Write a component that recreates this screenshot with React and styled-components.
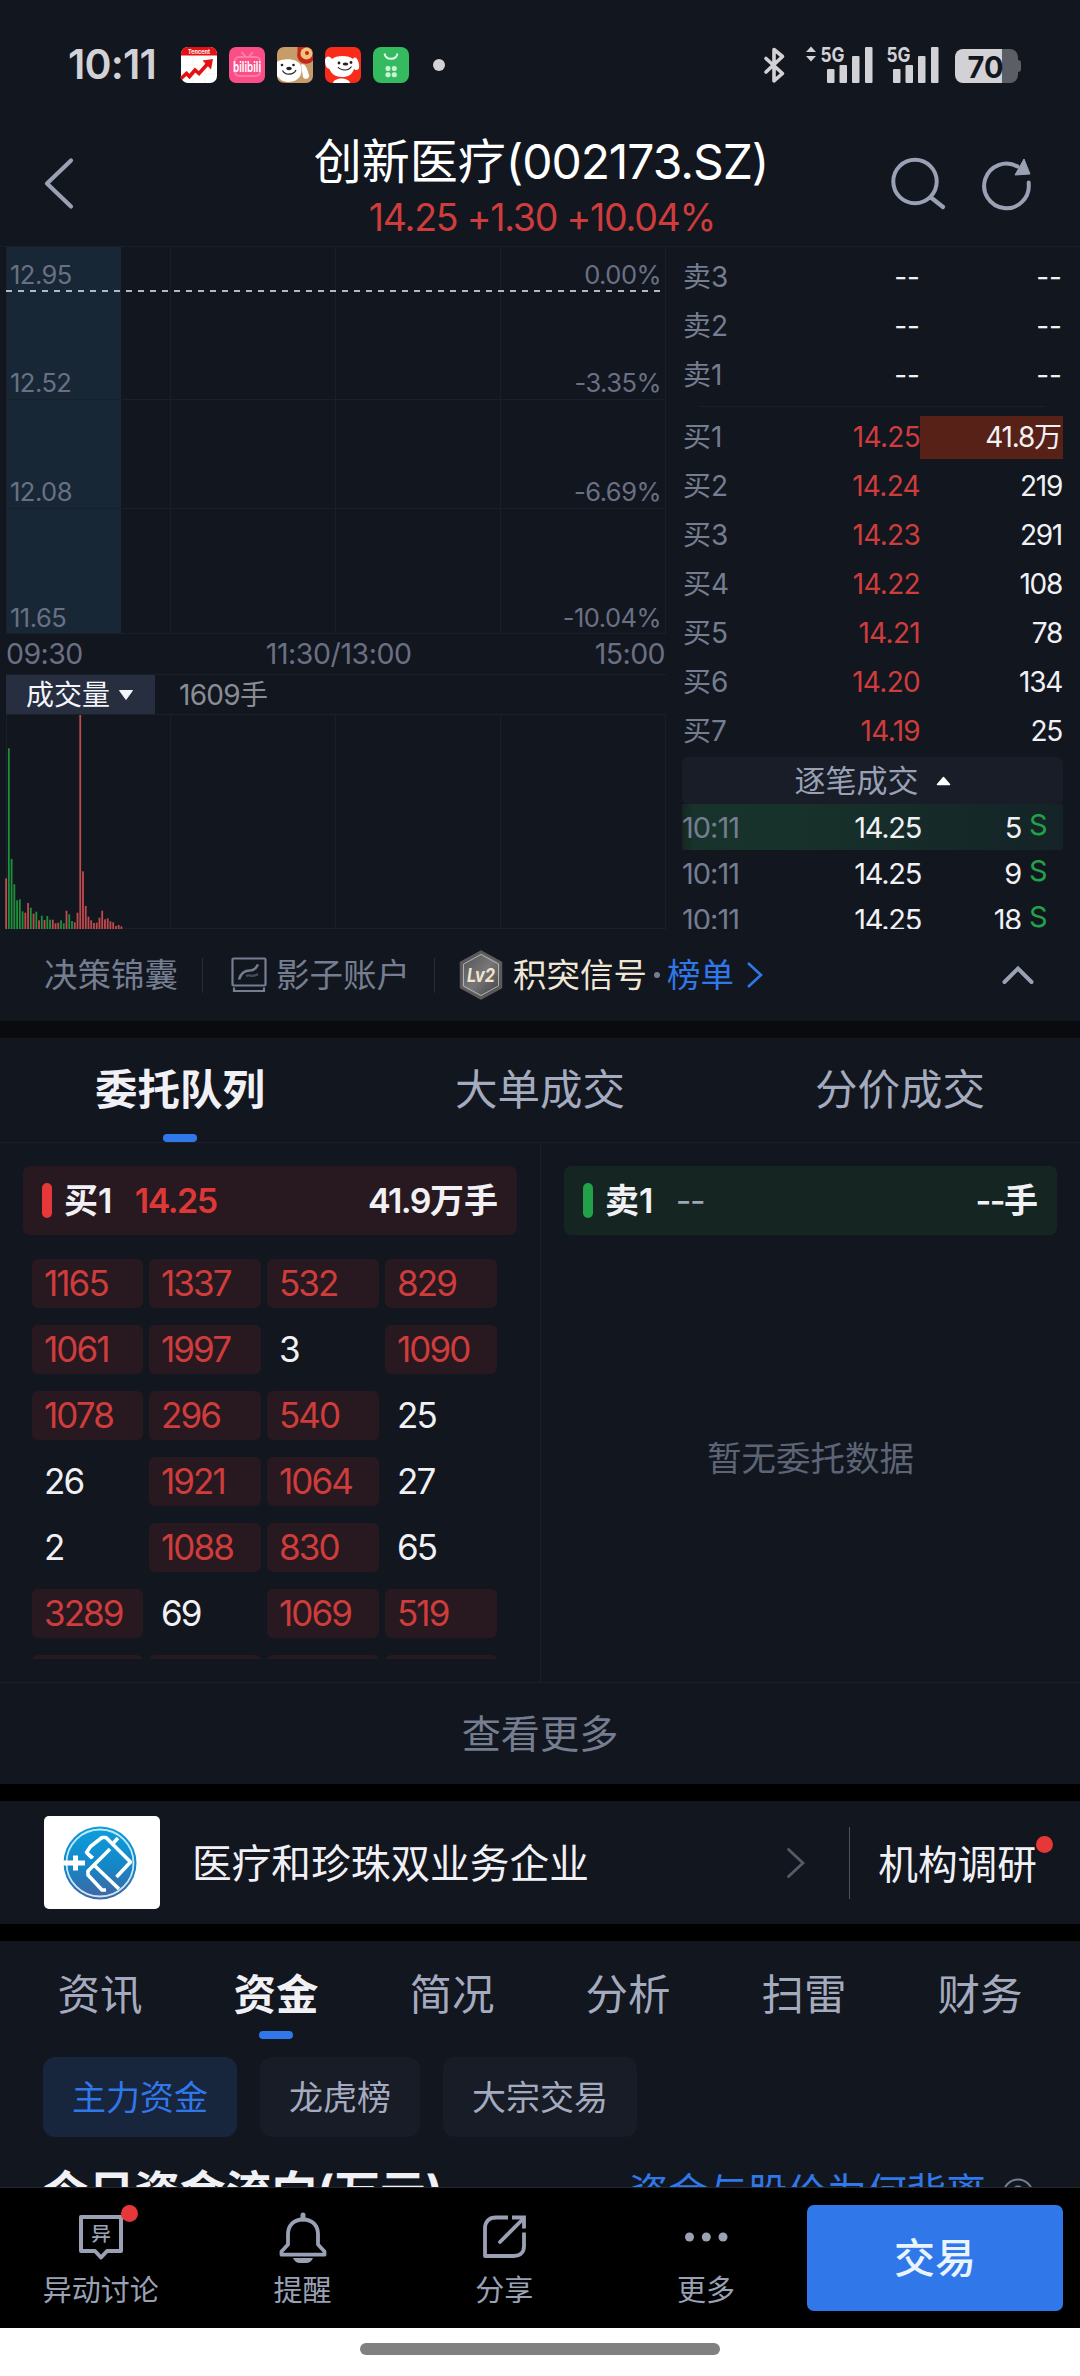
import React from 'react';
import styled, { createGlobalStyle, ThemeProvider } from 'styled-components';

const theme = {
  background: '#12161f',
  black: '#000000',
  line: '#1b1f29',
  red: '#cf3c3c',
  red_solid: '#e63838',
  red_background: '#27191f',
  green: '#22a04a',
  green_background: '#152521',
  blue: '#3078ea',
  text: '#f1f1f5',
  text_tab: '#a5abbf',
  text_label: '#757d90',
  text_axis: '#6a7084',
  text_cream: '#f0e6d6',
  icon: '#9aa1b5'
};

const GlobalStyle = createGlobalStyle`
  * {
    box-sizing: border-box;
  }

  body {
    margin: 0;
    background: #12161f;
    font-family: Inter, 'Noto Sans CJK SC', sans-serif;
  }

  p {
    margin: 0;
  }

  svg {
    display: block;
    flex: none;
    overflow: visible;
  }
`;

const Screen = styled.div`
  width: 1080px;
  height: 2376px;
  display: flex;
  flex-direction: column;
  overflow: hidden;
  white-space: nowrap;
  background: ${props => props.theme.background};
  color: ${props => props.theme.text};
`;

// digits sit tighter than the face's own spacing
const Num = styled.span`
  letter-spacing: ${props => props.$track || '-0.045em'};
`;

const Gap = styled.div`
  flex: none;
  height: 17px;
  background: ${props => props.$color || props.theme.black};
`;

/* ---------- status bar ---------- */

const StatusBar = styled.div`
  flex: none;
  height: 118px;
  padding: 40px 58px 28px 68px;
  display: flex;
  align-items: center;
  color: #d2d1d6;

  .status__time {
    width: 113px;
    font-size: 41px;
    font-weight: 600;
    line-height: 50px;
    padding-bottom: 2px;
  }

  .status__apps {
    display: flex;
    align-items: center;
    gap: 12px;
  }

  .status__dot {
    width: 12px;
    height: 12px;
    margin-left: 12px;
    border-radius: 50%;
    background: #d2d1d6;
  }

  .status__system {
    margin-left: auto;
  }
`;

const TencentIcon = () => (
  <svg width="36" height="36" viewBox="0 0 36 36">
    <rect width="36" height="36" rx="7" fill="#fff" />
    <path d="M0 8.500V7a7 7 0 0 1 7-7h22a7 7 0 0 1 7 7v1.500z" fill="#e60f12" />
    <text x="18" y="6.500" fontSize="5.500" fontWeight="700" fill="#fff" textAnchor="middle">
      Tencent
    </text>
    <path d="M12 9v27M24 9v27M0 18h36M0 27h36" stroke="#eee" strokeWidth="0.700" />
    <path d="M0 31.500l5.500-5 3 3 5.500-6.500 4 3.500L26.500 17" fill="none" stroke="#e60f12" strokeWidth="3.600" />
    <path d="M21.500 13.500l10.500-1.500-2 10.500z" fill="#e60f12" />
  </svg>
);

const BiliIcon = () => (
  <svg width="36" height="36" viewBox="0 0 36 36">
    <rect width="36" height="36" rx="7" fill="#fb4d86" />
    <rect x="6" y="10" width="25" height="19" rx="4" fill="none" stroke="#fd7ba6" strokeWidth="2" />
    <path d="M12.500 5l4 4.500M24 5l-4 4.500" stroke="#fd7ba6" strokeWidth="2" />
    <text x="18" y="24.500" fontSize="14" fontWeight="600" fill="#fff" textAnchor="middle" textLength="28" lengthAdjust="spacingAndGlyphs">
      bilibili
    </text>
  </svg>
);

const DogFinanceIcon = () => (
  <svg width="36" height="36" viewBox="0 0 36 36">
    <rect width="36" height="36" rx="7" fill="#c89c68" />
    <path d="M20.500 0H29a7 7 0 0 1 7 7v6.500a9 9 0 0 1-15.500-8.500z" fill="#c5261c" />
    <circle cx="29.500" cy="6.500" r="6" fill="#f3c27a" />
    <circle cx="30" cy="6" r="2" fill="#c5261c" />
    <path d="M24 17.500c5-2 6 5 8 10.500 1 4-5 5-6 2z" fill="#fff" />
    <path d="M0 15c5-4 20-4 23.500 3 2 7 1 12-5 15.500-5 2-12 2-15-1L0 29z" fill="#fff" />
    <circle cx="5" cy="18" r="1.300" fill="#222" />
    <circle cx="16.500" cy="18" r="1.300" fill="#222" />
    <ellipse cx="12" cy="21.500" rx="2.800" ry="1.700" fill="#222" />
    <path d="M5.500 23.500c2.500 5 11 5 13.500-.5" fill="none" stroke="#222" strokeWidth="1.200" />
    <path d="M3 34c4 2 8 2 10 2H7a7 7 0 0 1-4-2z" fill="#c5261c" />
  </svg>
);

const DogIcon = () => (
  <svg width="36" height="36" viewBox="0 0 36 36">
    <rect width="36" height="36" rx="7" fill="#f92c1a" />
    <path d="M0 13c1-5 5-4 7-1 4-4 17-4 21 0 3-5 7 4 6 9-1 3-4 2-5 1-2 6-6 8-12 8S6 27 4.500 22C1 21 0 18 0 13z" fill="#fff" />
    <circle cx="14" cy="16" r="1.400" fill="#222" />
    <circle cx="26" cy="15.500" r="1.400" fill="#222" />
    <ellipse cx="20.500" cy="17" rx="2.800" ry="1.500" fill="#222" />
    <path d="M13 20c3 4 11 4 13.500-.5" fill="none" stroke="#222" strokeWidth="1.100" />
    <path d="M8 36c1-6 16-6 17 0z" fill="#fff" />
  </svg>
);

const MarketIcon = () => (
  <svg width="36" height="36" viewBox="0 0 36 36">
    <rect width="36" height="36" rx="8" fill="#34bb5f" />
    <path d="M11.500 6.500c1 7 12 7 13 0" fill="none" stroke="#e4fbe9" strokeWidth="1.800" />
    <g fill="#c9f3d4">
      <rect x="12.500" y="19" width="5" height="5" rx="2" />
      <rect x="18.800" y="19" width="5" height="5" rx="2" />
      <rect x="12.500" y="25.200" width="5" height="5" rx="2" />
      <rect x="18.800" y="25.200" width="5" height="5" rx="2" />
    </g>
  </svg>
);

const SystemIcons = () => (
  <svg width="260" height="40" viewBox="762 44 260 40">
    <path
      d="M766 57.500l16.500 15L774 79.800V48.500l8.500 7L766 71"
      fill="none"
      stroke="#d2d1d6"
      strokeWidth="3.600"
      strokeLinejoin="round"
      strokeLinecap="round"
    />
    <g fill="#d2d1d6">
      <path d="M811 45.500l5 5.500h-10zM811 60.500l5-5.500h-10z" />
      <text x="820.500" y="61" fontSize="20.500" fontWeight="700" textLength="24" lengthAdjust="spacingAndGlyphs">
        5G
      </text>
      <rect x="827" y="68" width="7.500" height="14" rx="1" />
      <rect x="839.500" y="64" width="7.500" height="18" rx="1" />
      <rect x="852" y="55" width="7.500" height="27" rx="1" />
      <rect x="865" y="46" width="7.500" height="36" rx="1" />
      <text x="886.500" y="61" fontSize="20.500" fontWeight="700" textLength="24" lengthAdjust="spacingAndGlyphs">
        5G
      </text>
      <rect x="893" y="68" width="7.500" height="14" rx="1" />
      <rect x="905.500" y="64" width="7.500" height="18" rx="1" />
      <rect x="918" y="55" width="7.500" height="27" rx="1" />
      <rect x="931" y="46" width="7.500" height="36" rx="1" />
      <path d="M963 48h39v34h-39a8 8 0 0 1-8-8V56a8 8 0 0 1 8-8z" />
    </g>
    <path d="M1002 48h8a8 8 0 0 1 8 8v3c2 0 3 1 3 3v6c0 2-1 3-3 3v3a8 8 0 0 1-8 8h-8z" fill="#5c5e66" />
    <text x="985.500" y="76.500" fontSize="30" fontWeight="700" fill="#12161f" textAnchor="middle" textLength="36" lengthAdjust="spacingAndGlyphs">
      70
    </text>
  </svg>
);

/* ---------- header ---------- */

const HeaderBar = styled.div`
  flex: none;
  height: 129px;
  display: grid;
  grid-template-columns: 236px 1fr 236px;
  border-bottom: 1px solid ${props => props.theme.line};

  .header__back {
    padding: 38px 0 0 43px;
  }

  .header__title {
    padding: 18px 0 0 2px;
    text-align: center;
    font-size: 48px;
    line-height: 52px;
    color: #ffffff;
  }

  .header__quote {
    padding: 9px 0 0 4px;
    font-size: 37.5px;
    line-height: 42px;
    color: ${props => props.theme.red};
    text-align: center;
  }

  .header__actions {
    display: flex;
    gap: 34px;
    padding: 38px 0 0 45px;
  }
`;

/* ---------- charts and order book ---------- */

const Market = styled.div`
  flex: none;
  height: 682px;
  display: grid;
  grid-template-columns: 666px 1fr;
`;

const Charts = styled.div`
  padding-left: 6px;
  display: flex;
  flex-direction: column;
`;

const PriceChart = styled.div`
  position: relative;
  height: 387px;
`;

const AxisLabel = styled.span`
  position: absolute;
  top: ${props => props.$top}px;
  ${props => (props.$right ? 'right: 5px;' : 'left: 4px;')}
  font-size: 25.5px;
  line-height: 30px;
  letter-spacing: -0.02em;
  color: ${props => props.theme.text_axis};
`;

const TimeAxis = styled.div`
  height: 40px;
  padding-right: 1px;
  display: flex;
  justify-content: space-between;
  align-items: center;
  font-size: 28.5px;
  line-height: 38px;
  color: ${props => props.theme.text_axis};
`;

const VolumeHead = styled.div`
  height: 40px;
  display: flex;
  align-items: center;
  border-top: 1px solid ${props => props.theme.line};
  font-size: 28px;
  line-height: 40px;
  color: #8a8d95;

  .volume__pill {
    width: 149px;
    height: 40px;
    margin-right: 24px;
    padding-left: 20px;
    display: flex;
    align-items: center;
    gap: 8px;
    background: #272e40;
    color: #f4f5fa;
  }
`;

const VolumeSvg = styled.svg`
  margin-left: -1px;
`;

const VOLUMES =
  'r50.7 g180.7 g70 g44.7 g28.7 g29.7 g17.7 r16.3 r26 g21.3 r15.3 g17.3 r8.7 g13.3 r9 g13 g9.3 r9.3 r5.7 r6.3 g8.7 g5.7 r18.3 g14.7 g8 r6.7 r16.3 r214 r57.7 r23 r12.3 r8.7 r6 r6.3 r11.3 r18.3 r9.7 r10.7 r7.7 r6.7 r3 r4 r2.7'
    .split(' ')
    .map(v => ({ up: v[0] === 'r', height: Number(v.slice(1)) }));

const PriceGrid = () => (
  <svg width="660" height="387" viewBox="0 0 660 387">
    <rect width="115" height="387" fill="#172736" />
    <path
      d="M.5 0v387M164.500 0v387M329.500 0v387M494.500 0v387M659.500 0v387M0 152.500h660M0 261.500h660M0 386.500h660"
      stroke="#1b1f29"
    />
    <path d="M0 44h655" stroke="#b3b8c6" strokeWidth="2" strokeDasharray="6 6" />
  </svg>
);

const VolumeGrid = () => (
  <VolumeSvg width="662" height="215" viewBox="-1 0 662 215">
    <path
      d="M.5 0v215M164.500 0v215M329.500 0v215M494.500 0v215M659.500 0v215M0 .5h660M0 214.500h660"
      stroke="#1b1f29"
    />
    {VOLUMES.map((v, i) => (
      <rect
        key={i}
        x={i * 2.746 - 0.8}
        y={215 - v.height}
        width="1.8"
        height={v.height}
        fill={v.up ? '#c04a4c' : '#1f8f3c'}
      />
    ))}
  </VolumeSvg>
);

const Book = styled.div`
  height: 682px;
  padding: 6px 17px 0 16px;
  overflow: hidden;

  .book__divider {
    height: 1px;
    margin: 6px 17px 6px;
    background: ${props => props.theme.line};
  }
`;

const BookRow = styled.div`
  display: grid;
  grid-template-columns: 60px 178px 143px;
  height: 49px;
  align-items: center;
  text-align: right;
  font-size: 28px;
  line-height: 43px;

  .book__label {
    padding-left: 1px;
    text-align: left;
    color: ${props => props.theme.text_label};
  }

  .book__price {
    color: ${props => (props.$bid ? props.theme.red : props.theme.text)};
  }

  .book__volume {
    height: 43px;
    padding-right: 1px;
    background: ${props => (props.$marked ? '#572118' : 'transparent')};
  }
`;

const TickHead = styled.div`
  height: 47px;
  margin-top: 1px;
  display: flex;
  justify-content: center;
  align-items: center;
  gap: 17px;
  border-radius: 6px;
  background: #181d28;
  color: ${props => props.theme.icon};
  font-size: 31px;
  line-height: 47px;
`;

const TickRow = styled.div`
  display: grid;
  grid-template-columns: 100px 139px 100px 42px;
  height: 46px;
  font-size: 29px;
  line-height: 47px;
  text-align: right;
  background: ${props =>
    props.$fresh ? 'linear-gradient(90deg, #15261f 0, #17332b 3%, #17322a 30%, #142327 100%)' : 'none'};

  .tick__time {
    text-align: left;
    color: ${props => props.theme.text_label};
  }

  .tick__side {
    padding-left: 8px;
    text-align: left;
    line-height: 42px;
    color: ${props => props.theme.green};
  }
`;

const asks = ['卖3', '卖2', '卖1'];
const bids = [
  ['买1', '14.25', '41.8'],
  ['买2', '14.24', '219'],
  ['买3', '14.23', '291'],
  ['买4', '14.22', '108'],
  ['买5', '14.21', '78'],
  ['买6', '14.20', '134'],
  ['买7', '14.19', '25']
];
const ticks = ['5', '9', '18'];

const OrderBook = () => (
  <Book>
    {asks.map(label => (
      <BookRow key={label}>
        <span className="book__label">{label}</span>
        <span className="book__price">--</span>
        <span className="book__volume">--</span>
      </BookRow>
    ))}
    <div className="book__divider" />
    {bids.map(([label, price, volume], i) => (
      <BookRow key={label} $bid $marked={i === 0}>
        <span className="book__label">{label}</span>
        <span className="book__price">
          <Num $track="-0.025em">{price}</Num>
        </span>
        <span className="book__volume">
          <Num>{volume}</Num>
          {i === 0 && '万'}
        </span>
      </BookRow>
    ))}
    <TickHead>
      逐笔成交
      <svg width="15" height="10" viewBox="0 0 15 10">
        <path d="M1.500 8.500L7.500 1.500l6 7z" fill="#fff" stroke="#fff" strokeWidth="1.500" strokeLinejoin="round" />
      </svg>
    </TickHead>
    {ticks.map((count, i) => (
      <TickRow key={count} $fresh={i === 0}>
        <Num className="tick__time" $track="-0.035em">
          10:11
        </Num>
        <Num>14.25</Num>
        <Num>{count}</Num>
        <Num className="tick__side">S</Num>
      </TickRow>
    ))}
  </Book>
);

/* ---------- signal row ---------- */

const Signals = styled.div`
  flex: none;
  height: 92px;
  padding: 0 46px 0 44px;
  display: flex;
  align-items: center;
  font-size: 33.5px;
  line-height: 48px;
  color: ${props => props.theme.text_label};

  .signals__divider {
    width: 1px;
    height: 35px;
    margin: 0 24px;
    background: #262b37;
  }

  .signals__shadow {
    display: flex;
    align-items: center;
    gap: 9px;
    padding-left: 4px;
  }

  .signals__name {
    margin-left: 10px;
    color: ${props => props.theme.text_cream};
  }

  .signals__dot {
    width: 6px;
    height: 6px;
    margin: 0 7px;
    border-radius: 50%;
    background: ${props => props.theme.text_label};
  }

  .signals__link {
    margin-right: 12px;
    color: ${props => props.theme.blue};
  }

  .signals__fold {
    margin-left: auto;
  }
`;

const ShadowIcon = () => (
  <svg width="36" height="36" viewBox="0 0 36 36">
    <g fill="none" stroke="#757d90" strokeWidth="2.200">
      <rect x="1.500" y="1.500" width="33" height="27" rx="1" />
      <path d="M3 30.500v3.500h30v-3.500" />
      <path d="M8 22.500c2-7 6-9 11-9 4 0 6-2 8-6" strokeWidth="2.600" />
      <path d="M15 19c4-2 6 2 12-2" stroke="#454b5a" />
    </g>
  </svg>
);

const Lv2Icon = () => (
  <svg width="44" height="50" viewBox="0 0 44 50">
    <defs>
      <linearGradient id="lv2" x1="0" y1="0" x2="1" y2="1">
        <stop offset="0" stopColor="#4d4e51" />
        <stop offset="0.5" stopColor="#77777a" />
        <stop offset="1" stopColor="#3c3d40" />
      </linearGradient>
    </defs>
    <path d="M22 1.500l20 11v25l-20 11-20-11v-25z" fill="url(#lv2)" stroke="#5a5a5c" strokeWidth="2.500" strokeLinejoin="round" />
    <path d="M22 4.500l17.500 9.600v21.800L22 45.500 4.500 35.900V14.100z" fill="none" stroke="#b7b0a6" strokeWidth="1" />
    <text x="22" y="31.500" fontSize="19" fontWeight="700" fontStyle="italic" fill="#f4e3cd" textAnchor="middle" textLength="28" lengthAdjust="spacingAndGlyphs">
      Lv2
    </text>
  </svg>
);

/* ---------- order queue ---------- */

const QueueTabs = styled.div`
  flex: none;
  height: 105px;
  display: grid;
  grid-template-columns: repeat(3, 1fr);
  border-bottom: 1px solid ${props => props.theme.line};
`;

const Tab = styled.div`
  display: flex;
  flex-direction: column;
  align-items: center;
  padding-top: ${props => props.$top}px;
  font-size: 42.5px;
  line-height: 60px;
  font-weight: ${props => (props.$active ? 700 : 400)};
  color: ${props => (props.$active ? props.theme.text : props.theme.text_tab)};

  &::after {
    content: '';
    width: 34px;
    height: 8px;
    margin-top: ${props => props.$drop}px;
    border-radius: 4px;
    background: ${props => (props.$active ? props.theme.blue : 'transparent')};
  }
`;

const Queue = styled.div`
  flex: none;
  height: 540px;
  display: grid;
  grid-template-columns: 541px 539px;
  border-bottom: 1px solid ${props => props.theme.line};

  .queue__side {
    padding: 23px 23px 0;
    overflow: hidden;
  }

  .queue__side:first-child {
    border-right: 1px solid ${props => props.theme.line};
  }

  .queue__empty {
    padding-top: 199px;
    text-align: center;
    font-size: 34.5px;
    line-height: 50px;
    color: #5c6476;
  }
`;

const QueueHead = styled.div`
  height: 69px;
  padding: 0 19px;
  display: flex;
  align-items: center;
  border-radius: 7px;
  background: ${props => (props.$sell ? props.theme.green_background : props.theme.red_background)};
  font-size: 34px;
  font-weight: 600;
  line-height: 60px;

  &::before {
    content: '';
    width: 10px;
    height: 35px;
    margin-right: 12px;
    border-radius: 5px;
    background: ${props => (props.$sell ? props.theme.green : props.theme.red_solid)};
  }

  .queue-head__price {
    margin-left: 24px;
    color: ${props => (props.$sell ? '#a0a6b4' : '#dd3838')};
    font-weight: ${props => (props.$sell ? 400 : 600)};
  }

  .queue-head__total {
    margin-left: auto;
  }
`;

const Cells = styled.div`
  height: 400px;
  margin: 24px 20px 0 9px;
  display: grid;
  grid-template-columns: 111px 112px 112px 112px;
  grid-auto-rows: 49px;
  gap: 17px 6px;
  overflow: hidden;
`;

const Cell = styled.div`
  padding-left: 12px;
  border-radius: 6px;
  font-size: 35px;
  line-height: 49px;
  letter-spacing: -0.055em;
  background: ${props => (props.$big ? props.theme.red_background : 'transparent')};
  color: ${props => (props.$big ? props.theme.red : props.theme.text)};
`;

const queue = [
  1165, 1337, 532, 829,
  1061, 1997, 3, 1090,
  1078, 296, 540, 25,
  26, 1921, 1064, 27,
  2, 1088, 830, 65,
  3289, 69, 1069, 519
];

const More = styled.div`
  flex: none;
  height: 101px;
  text-align: center;
  font-size: 39.2px;
  line-height: 102px;
  color: ${props => props.theme.text_label};
`;

/* ---------- company row ---------- */

const Company = styled.div`
  flex: none;
  height: 123px;
  padding: 0 43px 0 44px;
  display: flex;
  align-items: center;
  font-size: 39.7px;
  line-height: 60px;

  .company__logo {
    width: 116px;
    height: 93px;
    margin-right: 32px;
    border-radius: 5px;
    background: #ffffff;
  }

  .company__name {
    padding-top: 2px;
  }

  .company__arrow {
    margin-left: auto;
    margin-right: 43px;
  }

  .company__survey {
    position: relative;
    height: 72px;
    padding-left: 28px;
    line-height: 76px;
    border-left: 1px solid #4d525f;
  }
`;

const RedDot = styled.span`
  position: absolute;
  top: ${props => props.$top}px;
  right: ${props => props.$right}px;
  width: 17px;
  height: 17px;
  border-radius: 50%;
  background: ${props => props.theme.red_solid};
`;

const CompanyLogo = () => (
  <svg width="116" height="93" viewBox="0 0 116 93">
    <defs>
      <linearGradient id="logo" x1="0" y1="0" x2="0" y2="1">
        <stop offset="0" stopColor="#0d9fdd" />
        <stop offset="0.55" stopColor="#1486c6" />
        <stop offset="1" stopColor="#4663a0" />
      </linearGradient>
    </defs>
    <circle cx="56" cy="47" r="36.500" fill="url(#logo)" />
    <circle cx="56" cy="47" r="33.500" fill="none" stroke="#c5e9f8" strokeWidth="1.800" />
    <g fill="none" stroke="#fff" strokeWidth="3.600" strokeLinejoin="round">
      <path d="M19 47h22M31.500 39.500v15" strokeWidth="5" />
      <path d="M49 42l-6.500-5.500 4-6L58 21.500h4l24.500 24.500-14 15" />
      <path d="M74 22l-6.500 7M66 33L44 55v4l14 15h4" />
      <path d="M51 50l24 23M48 42L43 37" />
    </g>
  </svg>
);

/* ---------- info tabs ---------- */

const InfoTabs = styled.div`
  flex: none;
  height: 116px;
  padding: 0 12px;
  display: grid;
  grid-template-columns: repeat(6, 1fr);
`;

const Chips = styled.div`
  flex: none;
  display: flex;
  gap: 23px;
  padding-left: 43px;
`;

const Chip = styled.div`
  height: 80px;
  padding: 0 29px;
  border-radius: 12px;
  font-size: 34px;
  line-height: 81px;
  background: ${props => (props.$active ? '#17253d' : '#171c27')};
  color: ${props => (props.$active ? props.theme.blue : props.theme.text_tab)};
`;

const FlowTitle = styled.div`
  flex: none;
  height: 50px;
  padding: 23px 46px 0 43px;
  display: flex;
  align-items: flex-start;
  overflow: hidden;
  font-size: 45.7px;
  font-weight: 700;
  line-height: 66px;

  .flow__link {
    margin-left: auto;
    margin-right: 16px;
    font-size: 39.7px;
    font-weight: 400;
    color: ${props => props.theme.blue};
  }

  svg {
    margin-top: 18px;
  }
`;

/* ---------- bottom bar ---------- */

const BottomBar = styled.div`
  flex: none;
  height: 141px;
  padding-right: 17px;
  display: flex;
  border-top: 1px solid #24262e;
  background: ${props => props.theme.black};
`;

const Action = styled.div`
  position: relative;
  flex: 1;
  display: flex;
  flex-direction: column;
  align-items: center;
  padding-top: 24px;
  font-size: 29px;
  line-height: 40px;
  color: ${props => props.theme.icon};

  svg {
    margin-bottom: 7px;
  }
`;

const TradeButton = styled.button`
  width: 256px;
  height: 106px;
  margin-top: 17px;
  border: none;
  border-radius: 7px;
  background: ${props => props.theme.blue};
  color: #e9f4ff;
  font-family: inherit;
  font-size: 41px;
  font-weight: 500;
  line-height: 106px;
  padding: 0;
`;

const HomeArea = styled.div`
  flex: none;
  height: 48px;
  padding-top: 15px;
  background: #ffffff;

  &::before {
    content: '';
    display: block;
    width: 360px;
    height: 12px;
    margin: 0 auto;
    border-radius: 6px;
    background: #808080;
  }
`;

const UnusualIcon = () => (
  <svg width="50" height="52" viewBox="0 0 50 52">
    <path d="M5 5h40v34H31l-6 6.500L19 39H5z" fill="none" stroke="#9aa1b5" strokeWidth="4" strokeLinejoin="round" />
    <text x="25" y="28.500" fontSize="19.500" fontWeight="500" fill="#9aa1b5" textAnchor="middle">
      异
    </text>
  </svg>
);

const BellIcon = () => (
  <svg width="50" height="52" viewBox="0 0 50 52">
    <path d="M25 3v4" stroke="#9aa1b5" strokeWidth="5" strokeLinecap="round" />
    <path
      d="M25 7.500c-9.500 0-15 6-15 15v10l-6.500 7v3.200h43v-3.200L40 32.500v-10c0-9-5.500-15-15-15z"
      fill="none"
      stroke="#9aa1b5"
      strokeWidth="3.800"
      strokeLinejoin="round"
    />
    <path d="M15 46h20c-1 3-4 5-7 5h-6c-3 0-6-2-7-5z" fill="#9aa1b5" />
  </svg>
);

const ShareIcon = () => (
  <svg width="50" height="52" viewBox="0 0 50 52">
    <g fill="none" stroke="#9aa1b5" strokeWidth="3.800">
      <path d="M29 5.500H17c-7 0-11 4-11 11V44h29c6.500 0 10-4 10-10V20.500" strokeLinejoin="round" />
      <path d="M33 5.500h12v11" />
      <path d="M44 7L21 30" strokeLinecap="round" />
    </g>
  </svg>
);

const DotsIcon = () => (
  <svg width="50" height="52" viewBox="0 0 50 52">
    <g fill="#9aa1b5">
      <circle cx="8.500" cy="25" r="4.500" />
      <circle cx="25.300" cy="25" r="4.500" />
      <circle cx="42" cy="25" r="4.500" />
    </g>
  </svg>
);

const App = () => (
  <ThemeProvider theme={theme}>
    <GlobalStyle />
    <Screen>
      <StatusBar>
        <Num className="status__time" $track="-0.02em">
          10:11
        </Num>
        <div className="status__apps">
          <TencentIcon />
          <BiliIcon />
          <DogFinanceIcon />
          <DogIcon />
          <MarketIcon />
          <span className="status__dot" />
        </div>
        <div className="status__system">
          <SystemIcons />
        </div>
      </StatusBar>

      <HeaderBar>
        <div className="header__back">
          <svg width="34" height="56" viewBox="0 0 34 56">
            <path d="M28 4.500L4 27.500l24 23" fill="none" stroke="#9aa1b5" strokeWidth="4.200" strokeLinecap="round" strokeLinejoin="round" />
          </svg>
        </div>
        <div>
          <p className="header__title">
            创新医疗<Num $track="-0.022em">(002173.SZ)</Num>
          </p>
          <p className="header__quote">
            <Num $track="-0.033em">14.25 +1.30 +10.04%</Num>
          </p>
        </div>
        <div className="header__actions">
          <svg width="56" height="54" viewBox="0 0 56 54">
            <circle cx="26" cy="25.500" r="21.700" fill="none" stroke="#9aa1b5" strokeWidth="4" />
            <path d="M42 41.500L54 51" stroke="#9aa1b5" strokeWidth="4.200" strokeLinecap="round" />
          </svg>
          <svg width="54" height="56" viewBox="0 0 54 56">
            <path d="M38.500 10.500A22.300 22.300 0 1 0 49.700 28v-1.500" fill="none" stroke="#9aa1b5" strokeWidth="4" strokeLinecap="round" />
            <path d="M45 3l6 15-15 1z" fill="#9aa1b5" stroke="#9aa1b5" strokeLinejoin="round" />
          </svg>
        </div>
      </HeaderBar>

      <Market>
        <Charts>
          <PriceChart>
            <PriceGrid />
            <AxisLabel $top={13}>12.95</AxisLabel>
            <AxisLabel $top={121}>12.52</AxisLabel>
            <AxisLabel $top={230}>12.08</AxisLabel>
            <AxisLabel $top={356}>11.65</AxisLabel>
            <AxisLabel $right $top={13}>0.00%</AxisLabel>
            <AxisLabel $right $top={121}>-3.35%</AxisLabel>
            <AxisLabel $right $top={230}>-6.69%</AxisLabel>
            <AxisLabel $right $top={356}>-10.04%</AxisLabel>
          </PriceChart>
          <TimeAxis>
            <Num $track="-0.02em">09:30</Num>
            <Num $track="-0.015em">11:30/13:00</Num>
            <Num $track="-0.02em">15:00</Num>
          </TimeAxis>
          <VolumeHead>
            <div className="volume__pill">
              成交量
              <svg width="16" height="12" viewBox="0 0 16 12">
                <path d="M1.500 1.500h13l-6.500 9z" fill="#f4f5fa" stroke="#f4f5fa" strokeLinejoin="round" />
              </svg>
            </div>
            <Num $track="-0.025em">1609</Num>手
          </VolumeHead>
          <VolumeGrid />
        </Charts>
        <OrderBook />
      </Market>

      <Signals>
        <span>决策锦囊</span>
        <span className="signals__divider" />
        <div className="signals__shadow">
          <ShadowIcon />
          影子账户
        </div>
        <span className="signals__divider" />
        <Lv2Icon />
        <span className="signals__name">积突信号</span>
        <span className="signals__dot" />
        <span className="signals__link">榜单</span>
        <svg width="18" height="28" viewBox="0 0 18 28">
          <path d="M2 2l13 12L2 26" fill="none" stroke="#3078ea" strokeWidth="2.600" />
        </svg>
        <svg className="signals__fold" width="32" height="20" viewBox="0 0 32 20">
          <path d="M2.500 17L16 3.500 29.500 17" fill="none" stroke="#9aa1b5" strokeWidth="4" strokeLinecap="round" />
        </svg>
      </Signals>

      <Gap $color="#090b0f" />

      <QueueTabs>
        <Tab $active $top={22} $drop={14}>委托队列</Tab>
        <Tab $top={22} $drop={14}>大单成交</Tab>
        <Tab $top={22} $drop={14}>分价成交</Tab>
      </QueueTabs>

      <Queue>
        <div className="queue__side">
          <QueueHead>
            买<Num>1</Num>
            <Num className="queue-head__price">14.25</Num>
            <span className="queue-head__total">
              <Num>41.9</Num>万手
            </span>
          </QueueHead>
          <Cells>
            {queue.map((count, i) => (
              <Cell key={i} $big={count > 100}>
                {count}
              </Cell>
            ))}
            <Cell $big />
            <Cell $big />
            <Cell $big />
            <Cell $big />
          </Cells>
        </div>
        <div className="queue__side">
          <QueueHead $sell>
            卖<Num>1</Num>
            <Num className="queue-head__price">--</Num>
            <span className="queue-head__total">
              <Num>--</Num>手
            </span>
          </QueueHead>
          <p className="queue__empty">暂无委托数据</p>
        </div>
      </Queue>
      <More>查看更多</More>

      <Gap />

      <Company>
        <div className="company__logo">
          <CompanyLogo />
        </div>
        <span className="company__name">医疗和珍珠双业务企业</span>
        <svg className="company__arrow" width="20" height="32" viewBox="0 0 20 32">
          <path d="M2.500 2.500L17 16 2.500 29.500" fill="none" stroke="#565b69" strokeWidth="2.800" strokeLinecap="round" />
        </svg>
        <div className="company__survey">
          机构调研
          <RedDot $top={9} $right={-16} />
        </div>
      </Company>

      <Gap />

      <InfoTabs>
        {['资讯', '资金', '简况', '分析', '扫雷', '财务'].map(name => (
          <Tab key={name} $active={name === '资金'} $top={24} $drop={6}>
            {name}
          </Tab>
        ))}
      </InfoTabs>
      <Chips>
        <Chip $active>主力资金</Chip>
        <Chip>龙虎榜</Chip>
        <Chip>大宗交易</Chip>
      </Chips>
      <FlowTitle>
        今日资金流向(万元)
        <span className="flow__link">资金与股价为何背离</span>
        <svg width="32" height="32" viewBox="0 0 32 32">
          <circle cx="16" cy="16" r="14.500" fill="none" stroke="#757d90" strokeWidth="2" />
          <path d="M11.500 13c0-6 9-6 9 0 0 3-4.500 3-4.500 7" fill="none" stroke="#757d90" strokeWidth="2" />
        </svg>
      </FlowTitle>

      <BottomBar>
        <Action>
          <UnusualIcon />
          异动讨论
          <RedDot $top={17} $right={64} />
        </Action>
        <Action>
          <BellIcon />
          提醒
        </Action>
        <Action>
          <ShareIcon />
          分享
        </Action>
        <Action>
          <DotsIcon />
          更多
        </Action>
        <TradeButton>交易</TradeButton>
      </BottomBar>
      <HomeArea />
    </Screen>
  </ThemeProvider>
);

export default App;
